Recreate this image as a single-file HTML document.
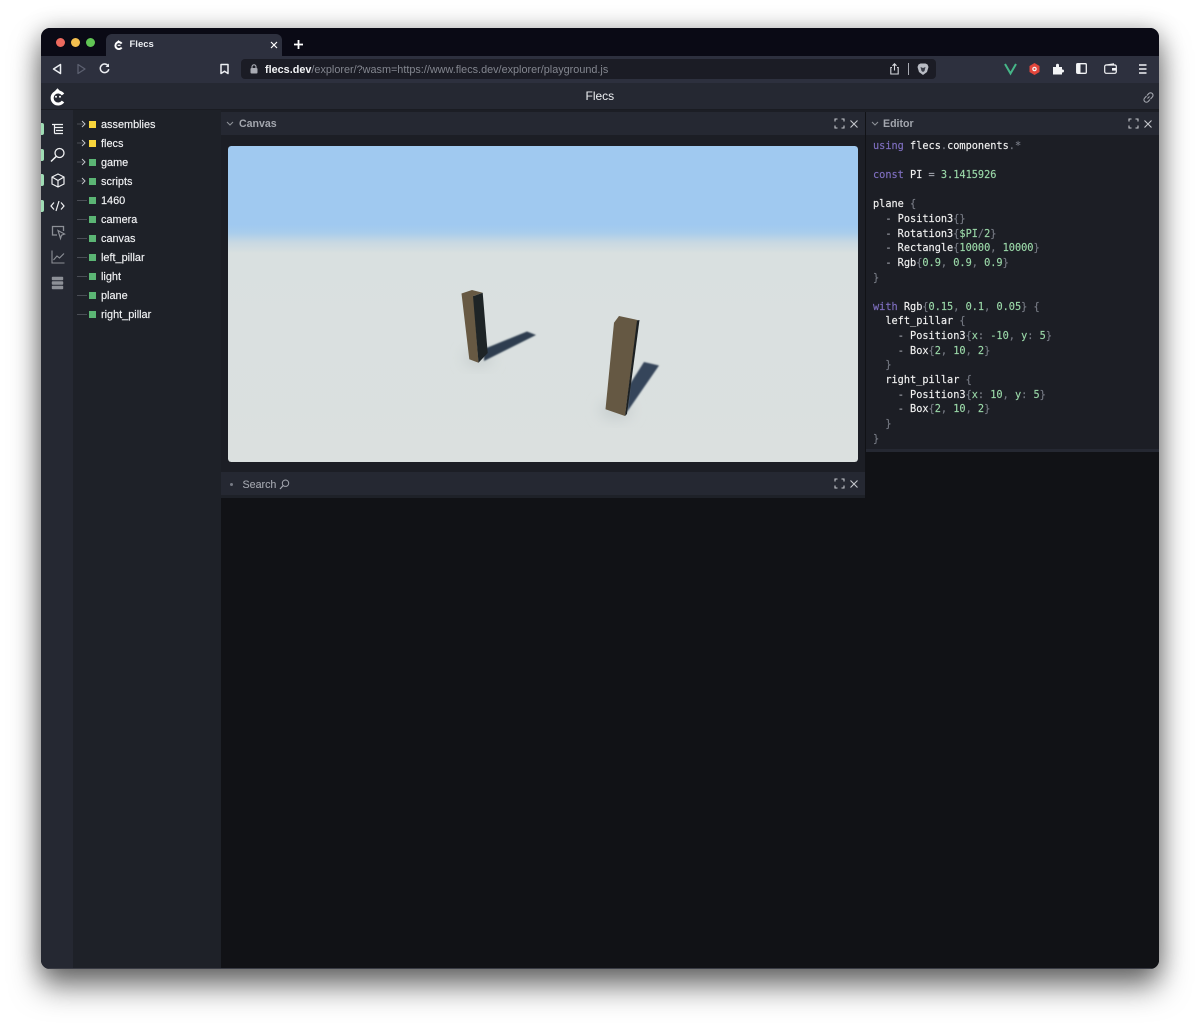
<!DOCTYPE html>
<html lang="en"><head><meta charset="utf-8"><title>Flecs</title>
<style>
html,body{margin:0;padding:0;background:#fff;width:1200px;height:1024px;overflow:hidden}
*{box-sizing:border-box}
.a{position:absolute}
body{font-family:"Liberation Sans",sans-serif;color:#fff}
#win{position:absolute;left:41px;top:28px;width:1118px;height:941px;border-radius:9px;overflow:hidden;background:#111216}
#shadow{position:absolute;left:41px;top:28px;width:1118px;height:941px;border-radius:9px;box-shadow:0 18px 30px rgba(0,0,0,.5),0 2px 24px rgba(0,0,0,.3)}
.t{position:absolute;white-space:nowrap}
.tree{position:absolute;left:101px;font-size:10.9px;color:#f2f3f5;line-height:14px;-webkit-text-stroke:.15px #f2f3f5}
.sq{position:absolute;left:89px;width:7px;height:7px}
.dash{position:absolute;left:77px;width:10px;height:1px;background:#4a4d55}
.code{position:absolute;left:873px;font:10.25px/14.64px "DejaVu Sans Mono","Liberation Mono",monospace;color:#f0f0f0;white-space:pre;top:138.8px;-webkit-text-stroke:.15px currentColor}
.k{color:#7f6fc0}.n{color:#9ad8a8}.p{color:#777b85}.d{color:#a3a6ae}
svg{position:absolute;overflow:visible}
.pn{color:#a3a6ae;font-size:10.6px;font-weight:bold}
</style></head><body>
<div id="shadow"></div>
<div id="win"></div>
<div class="a" style="left:41px;top:28px;width:1118px;height:941px;border-radius:9px;overflow:hidden">
<div class="a" style="left:0;top:0;width:1118px;height:28px;background:#0a0a15"></div>
<div class="a" style="left:65px;top:6px;width:176px;height:22px;background:#2d303e;border-radius:6px 6px 0 0"></div>
<div class="a" style="left:0;top:28px;width:1118px;height:27px;background:#2d303e"></div>
<div class="a" style="left:0;top:55px;width:1118px;height:26px;background:#252832"></div>
<div class="a" style="left:0;top:81px;width:1118px;height:860px;background:#1c1e25"></div>
<div class="a" style="left:0;top:81px;width:32px;height:860px;background:#252832"></div>
<div class="a" style="left:32px;top:81px;width:148px;height:860px;background:#1e2128"></div>
<div class="a" style="left:180px;top:84px;width:938px;height:857px;background:#111216"></div>
<div class="a" style="left:0;bottom:0;width:1118px;height:1px;background:#3a3c45"></div>
</div>
<!-- traffic lights -->
<div class="a" style="left:56px;top:37.500px;width:9px;height:9px;border-radius:50%;background:#ed6a5e"></div>
<div class="a" style="left:71px;top:37.500px;width:9px;height:9px;border-radius:50%;background:#f4bf4f"></div>
<div class="a" style="left:86px;top:37.500px;width:9px;height:9px;border-radius:50%;background:#61c554"></div>
<!-- tab -->
<svg style="left:112.500px;top:38.500px" width="11" height="12" viewBox="0 0 19 20"><path d="M15 14.500A6 6 0 1 1 15 7.500" fill="none" stroke="#fff" stroke-width="3.400"/><path d="M6 5L9.500 1.500L13 5Z" fill="#fff"/><path d="M8 10.500H13" stroke="#fff" stroke-width="2"/></svg>
<div class="t" style="left:129.500px;top:38.500px;font-size:9.500px;font-weight:bold;color:#eceef2;line-height:12px">Flecs</div>
<svg style="left:270px;top:41px" width="8" height="8"><path d="M1 1L7 7M7 1L1 7" stroke="#fff" stroke-width="1.200"/></svg>
<svg style="left:293px;top:39px" width="11" height="11"><path d="M5.500 1V10M1 5.500H10" stroke="#fff" stroke-width="1.800"/></svg>
<!-- toolbar icons -->
<svg style="left:52px;top:63px" width="11" height="12"><path d="M8.500 1.500V10.500L1.500 6Z" fill="none" stroke="#eceef2" stroke-width="1.500" stroke-linejoin="round"/></svg>
<svg style="left:76px;top:63px" width="11" height="12"><path d="M2 1.500V10.500L9 6Z" fill="none" stroke="#5c6070" stroke-width="1.300" stroke-linejoin="round"/></svg>
<svg style="left:98px;top:62px" width="13" height="13"><path d="M10.200 4A4.300 4.300 0 1 0 10.800 7.200" fill="none" stroke="#eceef2" stroke-width="1.500"/><path d="M11 1.500V5H7.500Z" fill="#eceef2"/></svg>
<svg style="left:219px;top:63px" width="11" height="12"><path d="M2 1.500H9V10.500L5.500 8.300L2 10.500Z" fill="none" stroke="#eceef2" stroke-width="1.500" stroke-linejoin="round"/></svg>
<!-- url bar -->
<div class="a" style="left:241px;top:59px;width:695px;height:20px;background:#1b1c25;border-radius:4px"></div>
<svg style="left:250px;top:64px" width="8" height="10"><rect x=".5" y="4" width="7" height="5.500" rx="1" fill="#a9abb3"/><path d="M2 4V2.800a2 2 0 0 1 4 0V4" fill="none" stroke="#a9abb3" stroke-width="1.100"/></svg>
<div class="t" style="left:265px;top:62.500px;font-size:10.850px;line-height:14px;color:#83868f"><span style="color:#f2f3f5;font-weight:bold">flecs.dev</span>/explorer/?wasm=https://www.flecs.dev/explorer/playground.js</div>
<svg style="left:889px;top:63px" width="11" height="12"><path d="M3 4.500H1.800V11H9.200V4.500H8M5.500 7.500V1M3.500 2.800L5.500 .8L7.500 2.800" fill="none" stroke="#d6d8dd" stroke-width="1.100"/></svg>
<div class="a" style="left:908px;top:63px;width:1px;height:12px;background:#a9abb3"></div>
<svg style="left:917px;top:63px" width="12" height="13"><path d="M1.500 1.500L3.500 .5H8.500L10.500 1.500L11.500 4L10 9L6 12L2 9L.5 4Z" fill="#b9bcc4"/><path d="M3.500 4L6 5L8.500 4L7.500 8L6 9L4.500 8Z" fill="#3a3d48"/></svg>
<svg style="left:1004px;top:63px" width="13" height="12"><path d="M1 1L6.500 10.500L12 1" fill="none" stroke="#46b688" stroke-width="2"/></svg>
<svg style="left:1029px;top:63px" width="11" height="12"><path d="M5.500 0L10.500 3V9L5.500 12L.5 9V3Z" fill="#e2463c"/><circle cx="5.500" cy="6" r="2.300" fill="#f2f2f2"/><circle cx="5.500" cy="6" r="1" fill="#e2463c"/></svg>
<svg style="left:1052px;top:63px" width="12" height="12"><path d="M1 4H4V2.300a1.500 1.500 0 0 1 3 0V4H10V6.500H10.500a1.500 1.500 0 0 1 0 3H10V11.500H1Z" fill="#f2f3f5"/></svg>
<svg style="left:1076px;top:63px" width="11" height="11"><rect x=".7" y=".7" width="9.600" height="9.600" rx="1" fill="none" stroke="#f2f3f5" stroke-width="1.300"/><rect x="1" y="1" width="3.500" height="9" fill="#f2f3f5"/></svg>
<svg style="left:1104px;top:63px" width="13" height="11"><rect x=".7" y="2" width="11.600" height="8.300" rx="1.500" fill="none" stroke="#f2f3f5" stroke-width="1.200"/><path d="M2 2L9.500 .8V2" fill="none" stroke="#f2f3f5" stroke-width="1"/><rect x="8" y="5" width="4" height="2.600" fill="#f2f3f5"/></svg>
<svg style="left:1138px;top:64px" width="9" height="10"><path d="M1 1H8.500M1 5H8.500M1 9H8.500" stroke="#f2f3f5" stroke-width="1.500"/></svg>
<!-- app header -->
<svg style="left:48px;top:87px" width="19" height="20" viewBox="0 0 19 20"><path d="M15 14.500A6 6 0 1 1 15 7.500" fill="none" stroke="#fff" stroke-width="3"/><path d="M6 5L9.500 1.300L13 5Z" fill="#fff"/><circle cx="8" cy="9.800" r="1" fill="#fff"/><circle cx="12" cy="9.800" r="1" fill="#fff"/></svg>
<div class="t" style="left:585.500px;top:89px;font-size:12px;line-height:15px;color:#eef0f3">Flecs</div>
<svg style="left:1142px;top:91px" width="13" height="13"><path d="M5.500 7.500L7.500 5.500M5 4.500L6.800 2.500a2.400 2.400 0 0 1 3.500 3.500L8.500 8M8 8.500L6.200 10.500a2.400 2.400 0 0 1-3.500-3.500L4.500 5" fill="none" stroke="#a3a6ae" stroke-width="1.100"/></svg>
<div class="a" style="left:41px;top:109px;width:1118px;height:1px;background:#1a1c22"></div>
<div class="a" style="left:221px;top:110px;width:938px;height:2px;background:#1c1e25"></div>
<!-- sidebar indicators -->
<div class="a" style="left:41px;top:123px;width:3px;height:12px;background:#9fdcb4;border-radius:0 2px 2px 0"></div>
<div class="a" style="left:41px;top:149px;width:3px;height:12px;background:#9fdcb4;border-radius:0 2px 2px 0"></div>
<div class="a" style="left:41px;top:174px;width:3px;height:12px;background:#9fdcb4;border-radius:0 2px 2px 0"></div>
<div class="a" style="left:41px;top:200px;width:3px;height:12px;background:#9fdcb4;border-radius:0 2px 2px 0"></div>
<!-- sidebar icons -->
<svg style="left:51px;top:123px" width="13" height="13"><path d="M1 1.500H12M3.500 4.500H12M5 7.500H12M3.500 10.500H12M3.500 1.500V10.500" fill="none" stroke="#f0f1f3" stroke-width="1.200"/></svg>
<svg style="left:50px;top:147px" width="16" height="16"><circle cx="9.500" cy="6" r="4.500" fill="none" stroke="#f0f1f3" stroke-width="1.300"/><path d="M6.300 9.300L1 14.500" stroke="#f0f1f3" stroke-width="1.500"/></svg>
<svg style="left:51px;top:173px" width="14" height="15"><path d="M7 1L13 4V11L7 14L1 11V4ZM1 4L7 7.500L13 4M7 7.500V14" fill="none" stroke="#f0f1f3" stroke-width="1.200" stroke-linejoin="round"/></svg>
<svg style="left:50px;top:200px" width="15" height="12"><path d="M4 2.500L1 6L4 9.500M11 2.500L14 6L11 9.500M9 1L6 11" fill="none" stroke="#f0f1f3" stroke-width="1.200"/></svg>
<svg style="left:51px;top:225px" width="14" height="14"><path d="M6 10H1.500V1.500H12.500V6" fill="none" stroke="#8d9097" stroke-width="1.300"/><path d="M7 5.500L13.500 9L10.500 10.200L9.500 13.500Z" fill="none" stroke="#8d9097" stroke-width="1.200"/></svg>
<svg style="left:51px;top:250px" width="14" height="14"><path d="M1 .5V13H13.500M2.500 10L6 6L8.500 8L13 3.500" fill="none" stroke="#8d9097" stroke-width="1.100"/></svg>
<svg style="left:51px;top:276px" width="13" height="14"><rect x=".8" y=".8" width="11.400" height="3.400" rx=".8" fill="#8d9097"/><rect x=".8" y="5.300" width="11.400" height="3.400" rx=".8" fill="#8d9097"/><rect x=".8" y="9.800" width="11.400" height="3.400" rx=".8" fill="#8d9097"/></svg>
<!-- tree -->
<svg style="left:77px;top:120px" width="11" height="8"><path d="M0 4H6" stroke="#4a4d55"/><path d="M5 1L8 4L5 7" fill="none" stroke="#c4c6cc" stroke-width="1"/></svg>
<svg style="left:77px;top:139px" width="11" height="8"><path d="M0 4H6" stroke="#4a4d55"/><path d="M5 1L8 4L5 7" fill="none" stroke="#c4c6cc" stroke-width="1"/></svg>
<svg style="left:77px;top:158px" width="11" height="8"><path d="M0 4H6" stroke="#4a4d55"/><path d="M5 1L8 4L5 7" fill="none" stroke="#c4c6cc" stroke-width="1"/></svg>
<svg style="left:77px;top:177px" width="11" height="8"><path d="M0 4H6" stroke="#4a4d55"/><path d="M5 1L8 4L5 7" fill="none" stroke="#c4c6cc" stroke-width="1"/></svg>
<div class="dash" style="top:200px"></div><div class="dash" style="top:219px"></div><div class="dash" style="top:238px"></div><div class="dash" style="top:257px"></div><div class="dash" style="top:276px"></div><div class="dash" style="top:295px"></div><div class="dash" style="top:314px"></div>
<div class="sq" style="top:120.500px;background:#f8d53c"></div><div class="sq" style="top:139.500px;background:#f8d53c"></div>
<div class="sq" style="top:158.500px;background:#5bb574"></div><div class="sq" style="top:177.500px;background:#5bb574"></div><div class="sq" style="top:196.500px;background:#5bb574"></div><div class="sq" style="top:215.500px;background:#5bb574"></div><div class="sq" style="top:234.500px;background:#5bb574"></div><div class="sq" style="top:253.500px;background:#5bb574"></div><div class="sq" style="top:272.500px;background:#5bb574"></div><div class="sq" style="top:291.500px;background:#5bb574"></div><div class="sq" style="top:310.500px;background:#5bb574"></div>
<div class="tree" style="top:117.500px">assemblies</div>
<div class="tree" style="top:136.500px">flecs</div>
<div class="tree" style="top:155.500px">game</div>
<div class="tree" style="top:174.500px">scripts</div>
<div class="tree" style="top:193.500px">1460</div>
<div class="tree" style="top:212.500px">camera</div>
<div class="tree" style="top:231.500px">canvas</div>
<div class="tree" style="top:250.500px">left_pillar</div>
<div class="tree" style="top:269.500px">light</div>
<div class="tree" style="top:288.500px">plane</div>
<div class="tree" style="top:307.500px">right_pillar</div>
<!-- canvas panel -->
<div class="a" style="left:221px;top:112px;width:644px;height:23px;background:#252832"></div>
<div class="a" style="left:221px;top:135px;width:644px;height:335px;background:#1c1e25"></div>
<svg style="left:226px;top:121px" width="8" height="6"><path d="M1 1L4 4L7 1" fill="none" stroke="#8d9097" stroke-width="1.100"/></svg>
<div class="t pn" style="left:239px;top:117px;line-height:14px">Canvas</div>
<svg style="left:834px;top:118px" width="11" height="11"><path d="M1 3.500V1H3.500M7.500 1H10V3.500M10 7.500V10H7.500M3.500 10H1V7.500" fill="none" stroke="#c4c6cc" stroke-width="1.100"/></svg>
<svg style="left:850px;top:120px" width="8" height="8"><path d="M.5 .5L7.500 7.500M7.500 .5L.5 7.500" stroke="#c4c6cc" stroke-width="1.100"/></svg>
<!-- scene -->
<svg style="left:228px;top:146px;border-radius:3px;overflow:hidden" width="630" height="316" viewBox="228 146 630 316">
<defs>
<linearGradient id="sky" x1="0" y1="146" x2="0" y2="462" gradientUnits="userSpaceOnUse">
<stop offset="0" stop-color="#a0c9f0"/><stop offset=".25" stop-color="#a0c9f0"/><stop offset=".275" stop-color="#a9cdec"/><stop offset=".305" stop-color="#c8d8e2"/><stop offset=".34" stop-color="#d9e0e0"/><stop offset="1" stop-color="#dbe0df"/>
</linearGradient>
<filter id="b" x="-20%" y="-20%" width="140%" height="140%"><feGaussianBlur stdDeviation=".8"/></filter>
<filter id="b2" x="-50%" y="-50%" width="200%" height="200%"><feGaussianBlur stdDeviation="7"/></filter>
<clipPath id="c"><rect x="228" y="146" width="630" height="316" rx="3"/></clipPath>
</defs>
<g clip-path="url(#c)">
<rect x="228" y="146" width="630" height="316" fill="url(#sky)"/>
<ellipse cx="478" cy="358" rx="14" ry="8" fill="#c6cdce" filter="url(#b2)"/>
<ellipse cx="616" cy="410" rx="16" ry="9" fill="#c6cdce" filter="url(#b2)"/>
<path d="M484 349L527 331.500L536 335L484 361Z" fill="#2f3d50" filter="url(#b)"/>
<path d="M630 384L644 362L659 365.500L627 412Z" fill="#34445a" filter="url(#b)"/>
<path d="M461.500 293.500L472 290L482.700 292.700L473.500 296L478.500 362.700L469.300 359.300Z" fill="#675943"/>
<path d="M473 296.200L482.700 292.700L487.700 353L478.500 362.700Z" fill="#1e2426"/>
<path d="M614 322.700L619 316L637.500 320L625 416L605.500 409.300Z" fill="#655843"/>
<path d="M637 320.500L639.500 320L627 414L625 416Z" fill="#1c2022"/>
</g>
</svg>
<!-- search panel -->
<div class="a" style="left:221px;top:470px;width:644px;height:28px;background:#252832"></div>
<div class="a" style="left:221px;top:495px;width:644px;height:3px;background:#1e2128"></div>
<div class="a" style="left:221px;top:470px;width:644px;height:2px;background:#1c1e25"></div>
<div class="a" style="left:230px;top:483px;width:3px;height:3px;border-radius:50%;background:#777b85"></div>
<div class="t" style="left:242.500px;top:477.500px;font-size:10.700px;line-height:14px;color:#a3a6ae;-webkit-text-stroke:.1px #a3a6ae">Search</div>
<svg style="left:279px;top:479px" width="11" height="11"><circle cx="6.500" cy="4.200" r="3.200" fill="none" stroke="#a3a6ae" stroke-width="1"/><path d="M4.200 6.500L1 10" stroke="#a3a6ae" stroke-width="1.200"/></svg>
<svg style="left:834px;top:478px" width="11" height="11"><path d="M1 3.500V1H3.500M7.500 1H10V3.500M10 7.500V10H7.500M3.500 10H1V7.500" fill="none" stroke="#c4c6cc" stroke-width="1.100"/></svg>
<svg style="left:850px;top:480px" width="8" height="8"><path d="M.5 .5L7.500 7.500M7.500 .5L.5 7.500" stroke="#c4c6cc" stroke-width="1.100"/></svg>
<!-- editor panel -->
<div class="a" style="left:866px;top:112px;width:293px;height:23px;background:#252832"></div>
<div class="a" style="left:866px;top:135px;width:293px;height:314px;background:#1c1e25"></div>
<div class="a" style="left:866px;top:449px;width:293px;height:3px;background:#252832"></div>
<svg style="left:871px;top:121px" width="8" height="6"><path d="M1 1L4 4L7 1" fill="none" stroke="#8d9097" stroke-width="1.100"/></svg>
<div class="t pn" style="left:883px;top:117px;line-height:14px">Editor</div>
<svg style="left:1128px;top:118px" width="11" height="11"><path d="M1 3.500V1H3.500M7.500 1H10V3.500M10 7.500V10H7.500M3.500 10H1V7.500" fill="none" stroke="#c4c6cc" stroke-width="1.100"/></svg>
<svg style="left:1144px;top:120px" width="8" height="8"><path d="M.5 .5L7.500 7.500M7.500 .5L.5 7.500" stroke="#c4c6cc" stroke-width="1.100"/></svg>
<div class="code"><span class="k">using</span> flecs<span class="p">.</span>components<span class="p">.*</span>

<span class="k">const</span> PI <span class="d">=</span> <span class="n">3.1415926</span>

plane <span class="p">{</span>
  <span class="d">-</span> Position3<span class="p">{}</span>
  <span class="d">-</span> Rotation3<span class="p">{</span><span class="n">$PI</span><span class="p">/</span><span class="n">2</span><span class="p">}</span>
  <span class="d">-</span> Rectangle<span class="p">{</span><span class="n">10000</span><span class="p">,</span> <span class="n">10000</span><span class="p">}</span>
  <span class="d">-</span> Rgb<span class="p">{</span><span class="n">0.9</span><span class="p">,</span> <span class="n">0.9</span><span class="p">,</span> <span class="n">0.9</span><span class="p">}</span>
<span class="p">}</span>

<span class="k">with</span> Rgb<span class="p">{</span><span class="n">0.15</span><span class="p">,</span> <span class="n">0.1</span><span class="p">,</span> <span class="n">0.05</span><span class="p">}</span> <span class="p">{</span>
  left_pillar <span class="p">{</span>
    <span class="d">-</span> Position3<span class="p">{</span><span class="n">x</span><span class="p">:</span> <span class="n">-10</span><span class="p">,</span> <span class="n">y</span><span class="p">:</span> <span class="n">5</span><span class="p">}</span>
    <span class="d">-</span> Box<span class="p">{</span><span class="n">2</span><span class="p">,</span> <span class="n">10</span><span class="p">,</span> <span class="n">2</span><span class="p">}</span>
  <span class="p">}</span>
  right_pillar <span class="p">{</span>
    <span class="d">-</span> Position3<span class="p">{</span><span class="n">x</span><span class="p">:</span> <span class="n">10</span><span class="p">,</span> <span class="n">y</span><span class="p">:</span> <span class="n">5</span><span class="p">}</span>
    <span class="d">-</span> Box<span class="p">{</span><span class="n">2</span><span class="p">,</span> <span class="n">10</span><span class="p">,</span> <span class="n">2</span><span class="p">}</span>
  <span class="p">}</span>
<span class="p">}</span></div>
</body></html>
